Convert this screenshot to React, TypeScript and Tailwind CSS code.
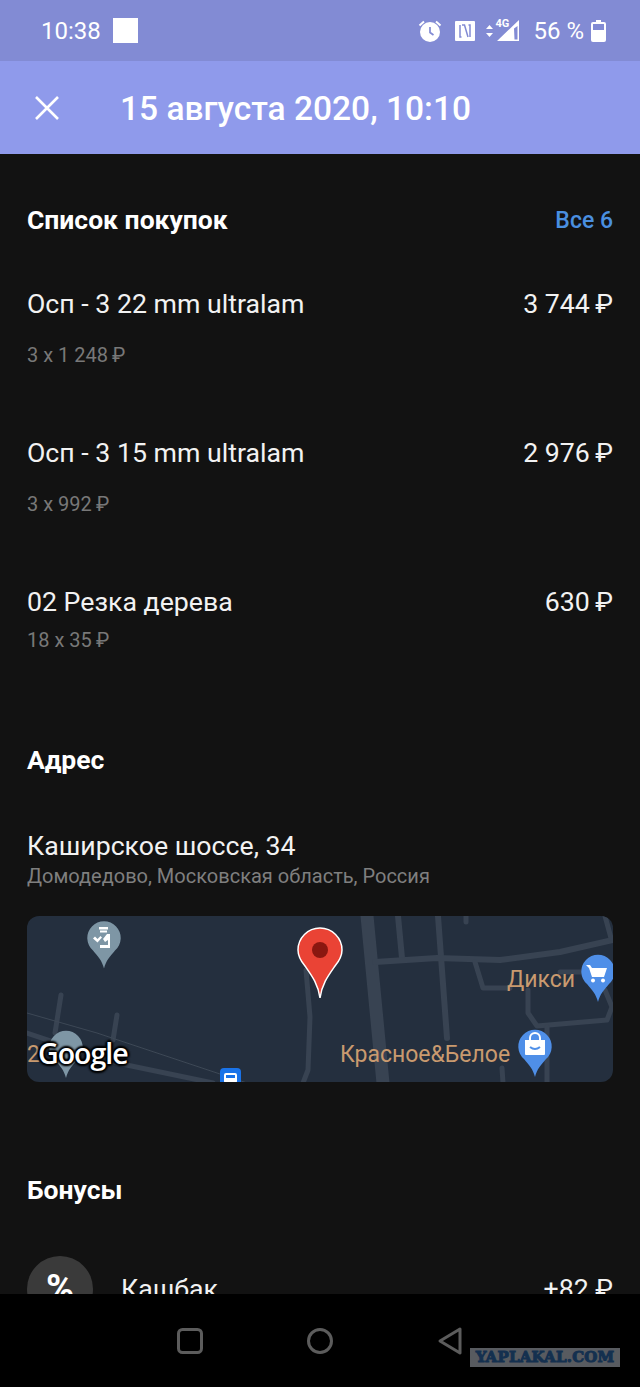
const roads: { d: string; w: number }[] = [
  { d: "M34 79L28 117", w: 5 },
  { d: "M90 99L86 124", w: 5 },
  { d: "M0 117L90 147L186 167", w: 5 },
  { d: "M279 54L283 101L281 154L276 167", w: 5 },
  { d: "M340 0L356 167", w: 13 },
  { d: "M371 0L375 42", w: 6 },
  { d: "M411 0L420 122", w: 6 },
  { d: "M348 46L410 42L473 44L533 36L586 24", w: 6 },
  { d: "M448 46L456 72L483 72", w: 5 },
  { d: "M439 0L439 6", w: 5 },
  { d: "M578 0L584 22", w: 5 },
  { d: "M533 56L560 56", w: 5 },
  { d: "M501 74L501 97L510 110L580 104L585 91L578 74", w: 5 },
  { d: "M520 111L520 167", w: 5 },
  { d: "M475 152L476 167", w: 5 },
]

function pinPath(x: number, top: number) {
  return `M${x} ${top + 48}C${x - 2} ${top + 40} ${x - 6} ${top + 36} ${x - 11} ${top + 30}A16.7 16.7 0 1 1 ${x + 11} ${top + 30}C${x + 6} ${top + 36} ${x + 2} ${top + 40} ${x} ${top + 48}Z`
}

function MapDrawing() {
  return (
    <svg viewBox="0 0 586 166" className="block w-full h-full" fill="none">
      {roads.map((r) => (
        <path key={r.d} d={r.d} stroke="#384352" strokeWidth={r.w} strokeLinecap="round" strokeLinejoin="round" />
      ))}
      <path d="M0 97L70 117L220 167" stroke="#3d4856" strokeWidth="1" />

      {/* gray pins */}
      <path d={pinPath(77, 4.5)} fill="#7e96a5" />
      <path d={pinPath(39, 114)} fill="#7e96a5" />
      <path d="M72 11h9v2.500H72zM73 14.500h7v2h-7z" fill="#fff" />
      <path d="M66 22.500l2-2 2.500 2.500 3-3 1.500 1.500-4.500 5z" fill="#fff" />
      <path d="M76 23l4-5h3v14H73v-3h8v-5l-3 2z" fill="#fff" />

      {/* blue pins */}
      <path d={pinPath(571, 38)} fill="#4f8fe8" />
      <path d={pinPath(508, 113)} fill="#4f8fe8" />
      <path d="M559 49h4l2 3h15l-3 9h-12l-3-9z" fill="#fff" />
      <circle cx="566" cy="64.500" r="2" fill="#fff" />
      <circle cx="576" cy="64.500" r="2" fill="#fff" />
      <path d="M498 124h20v14a1 1 0 0 1-1 1h-18a1 1 0 0 1-1-1z" fill="#fff" />
      <path d="M503 124v-2a5 5 0 0 1 10 0v2" stroke="#fff" strokeWidth="2" />
      <path d="M503 131q5 4 10 0" stroke="#4f8fe8" strokeWidth="2" />

      {/* bus stop */}
      <rect x="193" y="152" width="21" height="24" rx="4" fill="#1a73e8" />
      <rect x="197" y="157" width="13" height="10" rx="2" fill="#fff" />
      <rect x="199" y="159" width="9" height="3" fill="#1a73e8" />

      {/* red marker */}
      <path
        d="M293 82C291 68 285 60 278 50C273 44 271 39 271 34A22 22 0 0 1 315 34C315 39 313 44 308 50C301 60 295 68 293 82Z"
        fill="#ea4335"
        stroke="#fff"
        strokeWidth="1.500"
      />
      <circle cx="293" cy="34" r="8" fill="#8a1710" />
    </svg>
  )
}

function AlarmIcon() {
  return (
    <svg width="24" height="23" viewBox="0 0 24 23" fill="none">
      <circle cx="12" cy="13" r="10" fill="#fff" />
      <path d="M12 8v5.500l3.500 2.500" stroke="#828bd4" strokeWidth="1.700" />
      <path d="M1.500 6.500L6 2.500M22.500 6.500L18 2.500" stroke="#fff" strokeWidth="2" />
    </svg>
  )
}

function NfcIcon() {
  return (
    <svg width="20" height="20" viewBox="0 0 20 20" fill="none">
      <rect width="20" height="20" rx="1" fill="#fff" />
      <path d="M5 4v12h1.500M15 16V4h-1.500" stroke="#828bd4" strokeWidth="1.500" />
      <path d="M7 4h2.500l3.500 12" stroke="#828bd4" strokeWidth="1.500" />
    </svg>
  )
}

function SignalIcon() {
  return (
    <div className="relative w-[34px] h-[22px]">
      <svg width="34" height="22" viewBox="0 0 34 22" className="absolute left-0 top-0" fill="none">
        <path d="M0 9l3.500-4L7 9zM0 13l3.500 4L7 13z" fill="#fff" />
        <path d="M11 21L33 0v21zM28 8.500L28.500 19.500H31.500V6z" fill="#fff" fillRule="evenodd" />
      </svg>
      <span className="absolute left-[9px] top-[-2px] text-[11px] leading-[12px] font-bold text-white">4G</span>
    </div>
  )
}

function BatteryIcon() {
  return (
    <svg width="15" height="22" viewBox="0 0 15 22" fill="none">
      <path d="M5 0h5v2H5z" fill="#fff" />
      <rect x="0" y="2" width="15" height="20" rx="2" fill="#fff" />
      <rect x="2" y="4" width="11" height="6" fill="#828bd4" />
    </svg>
  )
}

function Section({ children, className }: { children: string; className: string }) {
  return <h2 className={`text-[26.5px] leading-[32px] font-bold text-white ${className}`}>{children}</h2>
}

function PurchaseRow({ name, price, detail, detailGap, className }: {
  name: string
  price: string
  detail: string
  detailGap: string
  className: string
}) {
  return (
    <div className={className}>
      <div className="flex justify-between text-[26.7px] leading-[32px] text-[#f2f2f2]">
        <span>{name}</span>
        <span>{price}</span>
      </div>
      <div className={`text-[20px] leading-[24px] text-[#787878] ${detailGap}`}>{detail}</div>
    </div>
  )
}

export default function App() {
  return (
    <div className="relative h-[1387px] w-[640px] overflow-hidden flex flex-col bg-black font-['Roboto',sans-serif]">
      <div className="h-[61px] shrink-0 bg-[#828bd4] flex items-center pl-[41px] pr-[34px] text-white">
        <span className="text-[24px] leading-[30px]">10:38</span>
        <div className="ml-[12px] w-[25px] h-[25px] bg-white" />
        <div className="ml-auto flex items-center">
          <AlarmIcon />
          <div className="ml-[13px]"><NfcIcon /></div>
          <div className="ml-[11px]"><SignalIcon /></div>
          <span className="ml-[13px] text-[24px] leading-[30px]">56 %</span>
          <div className="ml-[7px]"><BatteryIcon /></div>
        </div>
      </div>

      <div className="h-[93px] shrink-0 bg-[#8f9aeb] flex items-center pl-[34px] text-white">
        <svg width="26" height="26" viewBox="0 0 26 26" fill="none" className="shrink-0">
          <path d="M2 2L24 24M24 2L2 24" stroke="#fff" strokeWidth="2.600" />
        </svg>
        <h1 className="ml-[60px] mt-[2px] text-[33.500px] leading-[40px] font-medium">15 августа 2020, 10:10</h1>
      </div>

      <main className="flex-1 min-h-0 overflow-hidden bg-[#121212] px-[27px]">
        <div className="mt-[50px] h-[32px] flex items-center justify-between">
          <Section className="">Список покупок</Section>
          <span className="mt-[2px] text-[23px] leading-[30px] font-medium text-[#4a8fe0]">Все 6</span>
        </div>

        <PurchaseRow className="mt-[52px]" name="Осп - 3 22 mm ultralam" price={"3 744\u2009₽"} detail={"3 x 1 248\u2009₽"} detailGap="mt-[23px]" />
        <PurchaseRow className="mt-[70px]" name="Осп - 3 15 mm ultralam" price={"2 976\u2009₽"} detail={"3 x 992\u2009₽"} detailGap="mt-[23px]" />
        <PurchaseRow className="mt-[70px]" name="02 Резка дерева" price={"630\u2009₽"} detail={"18 x 35\u2009₽"} detailGap="mt-[10px]" />

        <Section className="mt-[92px]">Адрес</Section>
        <div className="mt-[54px] text-[26.7px] leading-[32px] text-[#f2f2f2]">Каширское шоссе, 34</div>
        <div className="mt-[2px] text-[20px] leading-[24px] text-[#7f7f7f]">Домодедово, Московская область, Россия</div>

        <div className="relative mt-[28px] h-[166px] overflow-hidden rounded-[12px] bg-[#242f3e]">
          <MapDrawing />
          <span className="absolute left-[480px] top-[49px] text-[23px] leading-[30px] text-[#c99a6f]">Дикси</span>
          <span className="absolute left-[313px] top-[124px] text-[23px] leading-[30px] text-[#c99a6f]">Красное&Белое</span>
          <span className="absolute left-0 top-[124px] text-[23px] leading-[30px] text-[#c99a6f]">2</span>
          <span className="absolute left-[11px] top-[119px] font-['Open_Sans',sans-serif] text-[28.500px] leading-[36px] font-semibold tracking-[-1px] text-white [text-shadow:0_0_3px_#000,0_0_3px_#000,2px_0_2px_#000,-2px_0_2px_#000,0_2px_2px_#000,0_-2px_2px_#000]">
            Google
          </span>
        </div>

        <Section className="mt-[92px]">Бонусы</Section>
        <div className="mt-[50px] flex items-center">
          <div className="w-[66px] h-[66px] shrink-0 rounded-full bg-[#3a3a3a] flex items-center justify-center text-[38px] font-bold text-white">
            %
          </div>
          <span className="ml-[28px] text-[26.7px] text-[#f2f2f2]">Кашбак</span>
          <span className="ml-auto text-[26.7px] text-[#f2f2f2]">+82 ₽</span>
        </div>
      </main>

      <nav className="h-[93px] shrink-0 bg-black flex items-center justify-center gap-[100px]">
        <svg width="30" height="30" viewBox="0 0 30 30" fill="none">
          <rect x="3.500" y="3.500" width="23" height="23" rx="4" stroke="#5c5c5c" strokeWidth="3" />
        </svg>
        <svg width="30" height="30" viewBox="0 0 30 30" fill="none">
          <ellipse cx="15" cy="15" rx="11.500" ry="11.500" stroke="#5c5c5c" strokeWidth="3" />
        </svg>
        <svg width="30" height="30" viewBox="0 0 30 30" fill="none">
          <path d="M25 3L5 15L25 27Z" stroke="#5c5c5c" strokeWidth="3" strokeLinejoin="round" />
        </svg>
      </nav>

      <div className="absolute left-[470px] top-[1348px] w-[150px] h-[19px] bg-[#585b60] flex items-center justify-center font-['DejaVu_Serif',serif] text-[15px] font-bold tracking-[0.2px] text-[#14304f] [-webkit-text-stroke:1px_#14304f]">
        YAPLAKAL.COM
      </div>
    </div>
  )
}
